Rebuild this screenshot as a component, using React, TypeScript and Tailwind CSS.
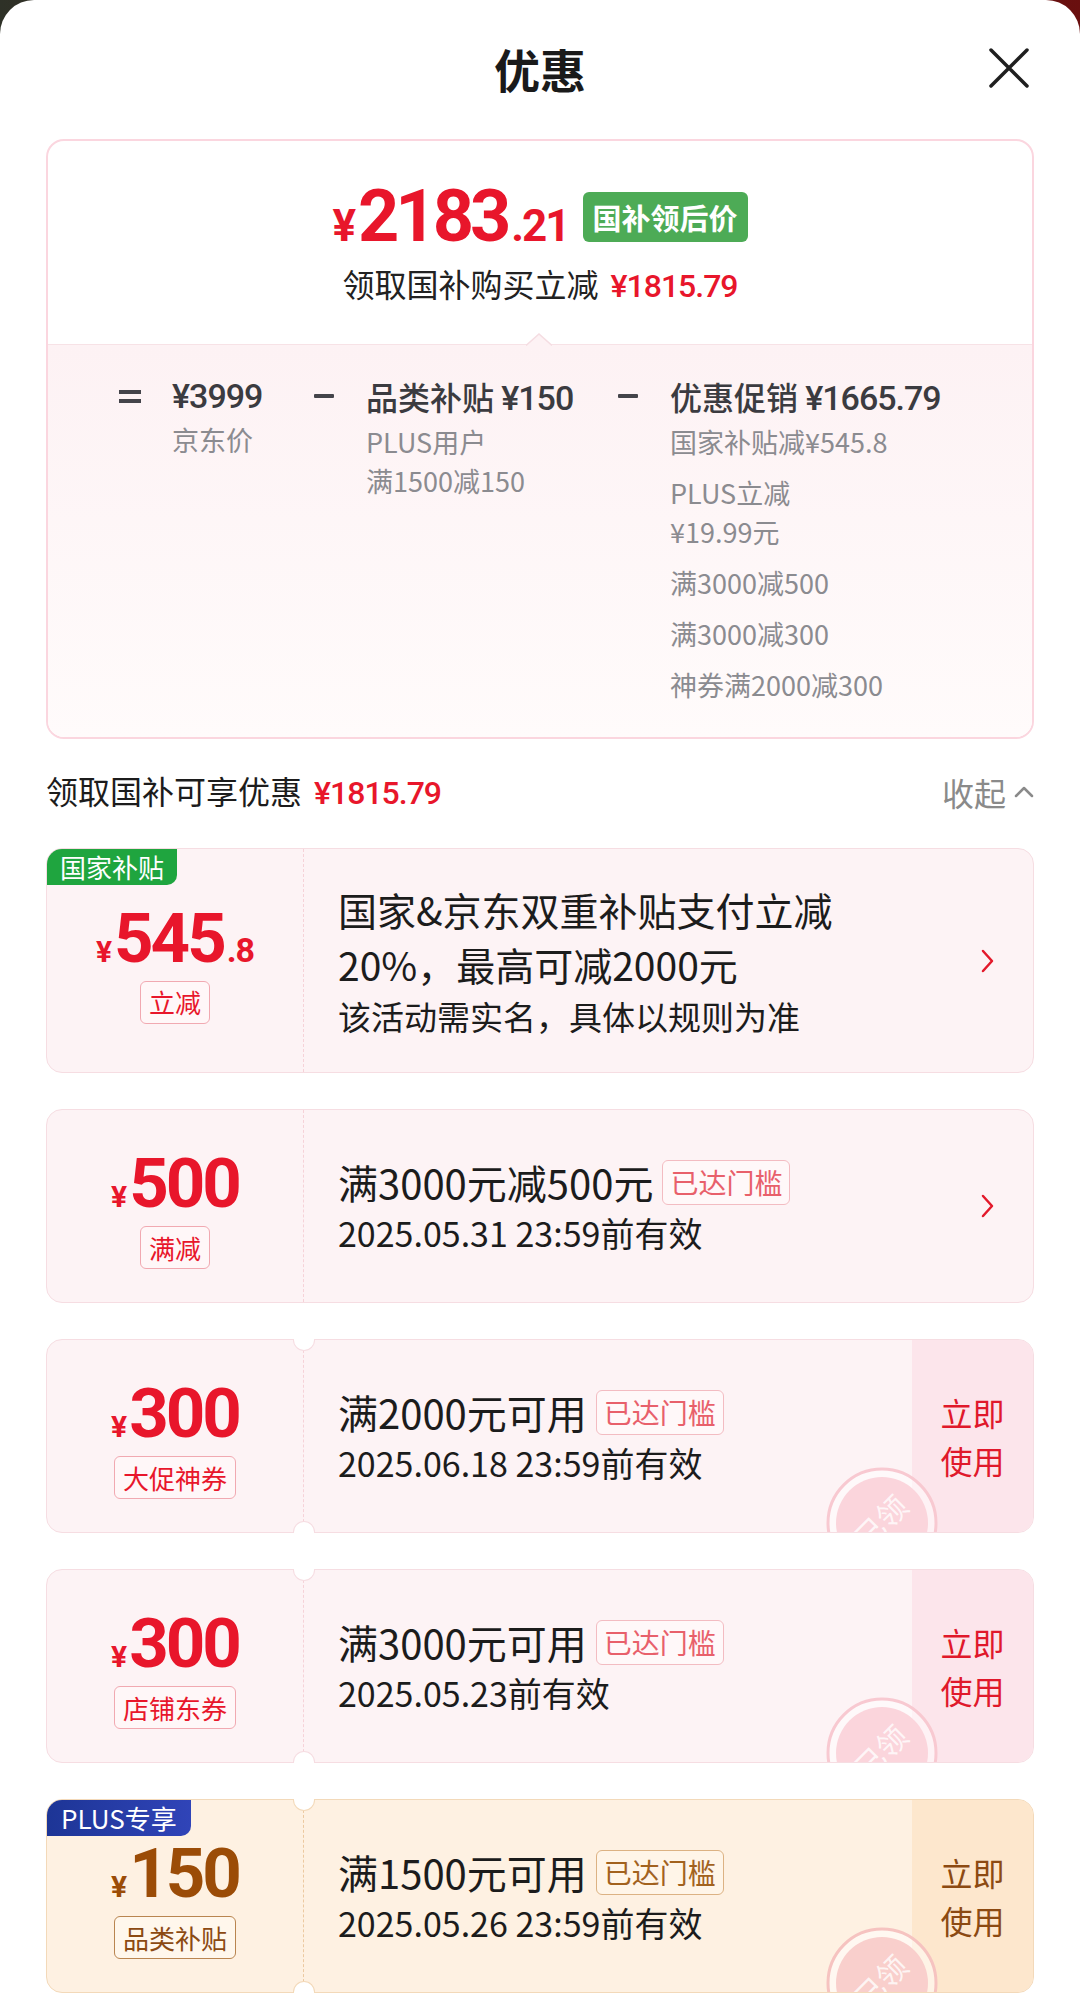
import { FC, ReactNode } from "react";

const cjk = "font-['Noto_Sans_CJK_SC','Noto_Sans',sans-serif]";
const num = "font-['Roboto','Noto_Sans_CJK_SC',sans-serif]";

type Theme = "red" | "plus";

const Stamp: FC<{ theme: Theme }> = ({ theme }) => {
  const ring = theme === "plus" ? "#f6c3c0" : "#f8c9d1";
  const fill = theme === "plus" ? "#f9cfcc" : "#fbd5dc";
  return (
    <svg
      className="absolute left-[779px] top-[127px]"
      width="112"
      height="112"
      viewBox="0 0 112 112"
    >
      <circle cx="56" cy="56" r="54" fill="#fff" fillOpacity="0.5" stroke={ring} strokeWidth="3" />
      <circle cx="56" cy="56" r="46" fill={fill} />
      <text
        x="56"
        y="66"
        textAnchor="middle"
        fontSize="30"
        fill="#fff"
        fillOpacity="0.8"
        transform="rotate(-45 56 56)"
        fontFamily="Noto Sans CJK SC, sans-serif"
      >
        已领
      </text>
    </svg>
  );
};

const Chevron: FC = () => (
  <svg width="14" height="24" viewBox="0 0 14 24" className="shrink-0">
    <path d="M2 2 L11 12 L2 22" fill="none" stroke="#e3192b" strokeWidth="2.5" strokeLinecap="round" strokeLinejoin="round" />
  </svg>
);

const Notch: FC<{ pos: "top" | "bottom"; border: string }> = ({ pos, border }) =>
  pos === "top" ? (
    <div className={`absolute left-[246px] top-[-1px] h-[12px] w-[22px] rounded-b-full border border-t-0 bg-white ${border}`} />
  ) : (
    <div className={`absolute left-[246px] bottom-[-1px] h-[12px] w-[22px] rounded-t-full border border-b-0 bg-white ${border}`} />
  );

interface CouponProps {
  theme?: Theme;
  height: string;
  badge?: ReactNode;
  amount: string;
  decimal?: string;
  tag: string;
  children: ReactNode;
  notches?: boolean;
  action?: boolean;
  chevron?: boolean;
}

const Coupon: FC<CouponProps> = ({
  theme = "red",
  height,
  badge,
  amount,
  decimal,
  tag,
  children,
  notches,
  action,
  chevron,
}) => {
  const plus = theme === "plus";
  return (
    <div
      className={`relative rounded-[16px] border ${height} ${
        plus ? "border-[#f3d9b9] bg-[#fef1e2]" : "border-[#f6dde2] bg-[#fdf3f5]"
      }`}
    >
      <div className="relative flex h-full overflow-hidden rounded-[15px]">
        {badge}
        <div
          className={`flex w-[257px] shrink-0 flex-col items-center justify-center border-r border-dashed pt-[6px] ${
            plus ? "border-[#ecc9a0]" : "border-[#f6d2d8]"
          }`}
        >
          <div className={`flex items-baseline font-bold leading-none ${num} ${plus ? "text-[#9b4c07]" : "text-[#e8162b]"}`}>
            <span className="mr-[2px] text-[30px]">¥</span>
            <span className="text-[69px] tracking-[-3px]">{amount}</span>
            {decimal && <span className="ml-[3px] text-[34px] tracking-[-1px]">{decimal}</span>}
          </div>
          <div
            className={`mt-[8px] flex h-[43px] items-center rounded-[6px] border px-[8px] text-[26px] leading-none ${
              plus
                ? "border-[#b98550] bg-[#fff7ec] text-[#8c4a12]"
                : "border-[#f1a9b1] bg-[#fff7f8] text-[#e8162b]"
            }`}
          >
            {tag}
          </div>
        </div>
        <div className="flex min-w-0 flex-1 items-center pl-[34px]">
          <div className="flex-1 text-[#1c1c1c]">{children}</div>
          {chevron && (
            <div className="pr-[38px]">
              <Chevron />
            </div>
          )}
          {action && (
            <div
              className={`flex h-full w-[121px] shrink-0 flex-col items-center justify-center text-[32px] leading-[48px] ${
                plus ? "bg-[#fde7cd] text-[#8c4a12]" : "bg-[#fce5eb] text-[#e0192b]"
              }`}
            >
              <span>立即</span>
              <span>使用</span>
            </div>
          )}
        </div>
        {action && <Stamp theme={theme} />}
      </div>
      {notches && (
        <>
          <Notch pos="top" border={plus ? "border-[#f3d9b9]" : "border-[#f6dde2]"} />
          <Notch pos="bottom" border={plus ? "border-[#f3d9b9]" : "border-[#f6dde2]"} />
        </>
      )}
    </div>
  );
};

const Reached: FC<{ plus?: boolean }> = ({ plus }) => (
  <span
    className={`ml-[9px] inline-flex h-[45px] items-center rounded-[6px] border px-[7px] text-[28px] leading-none ${
      plus ? "border-[#dcb283] bg-[#fff5e8] text-[#a2621e]" : "border-[#f3bcc2] bg-[#fff8f9] text-[#e8606b]"
    }`}
  >
    已达门槛
  </span>
);

const CouponText: FC<{ title: string; date: string; plus?: boolean }> = ({ title, date, plus }) => (
  <div>
    <div className="flex items-center text-[40px] leading-[54px]">
      <span>{title}</span>
      <Reached plus={plus} />
    </div>
    <div className="text-[34px] leading-[48px]">{date}</div>
  </div>
);

const SubItem: FC<{ children: ReactNode }> = ({ children }) => (
  <div className="text-[27px] leading-[39px] text-[#8b8b90]">{children}</div>
);

const Minus: FC = () => (
  <div className="flex h-[40px] w-[52px] items-center">
    <div className="h-[4px] w-[20px] rounded-[1px] bg-[#44444a]" />
  </div>
);

const App: FC = () => {
  return (
    <div className={`min-h-[2012px] w-[1080px] bg-gradient-to-r from-[#2e3127] via-[#4a1a16] to-[#6a0f0f] ${cjk}`}>
      <div className="min-h-[2012px] rounded-t-[34px] bg-white pb-[17px]">
        {/* Header */}
        <div className="relative flex h-[136px] items-center justify-center">
          <h1 className="text-[46px] font-bold leading-none text-[#1a1a1a]">优惠</h1>
          <button className="absolute right-[50px] top-[47px]" aria-label="close">
            <svg width="42" height="42" viewBox="0 0 42 42">
              <path d="M3 3 L39 39 M39 3 L3 39" stroke="#1f1f1f" strokeWidth="3.5" strokeLinecap="round" />
            </svg>
          </button>
        </div>

        {/* Price summary */}
        <div className="mx-[46px] mt-[3px] overflow-hidden rounded-[18px] border-2 border-[#fbd6df]">
          <div className="flex flex-col items-center pb-[38px] pt-[40px]">
            <div className="flex items-center">
              <div className={`flex items-baseline font-bold leading-none text-[#e8162b] ${num}`}>
                <span className="mr-[2px] text-[44px]">¥</span>
                <span className="text-[72px] tracking-[-4px]">2183</span>
                <span className="ml-[4px] text-[44px] tracking-[-2px]">.21</span>
              </div>
              <div className="ml-[14px] flex h-[50px] items-center rounded-[6px] bg-[#4dab56] px-[10px] text-[29px] font-bold leading-none text-white">
                国补领后价
              </div>
            </div>
            <div className="mt-[10px] flex items-baseline text-[32px] leading-[40px] text-[#222]">
              <span>领取国补购买立减</span>
              <span className={`ml-[12px] font-medium text-[#e8162b] ${num} text-[32px] tracking-[-1px]`}>¥1815.79</span>
            </div>
          </div>

          <div className="relative border-t-[1.5px] border-[#f7e2e6] bg-gradient-to-b from-[#fdf2f4] to-[#fffbfb] pb-[33px] pt-[31px]">
            <svg className="absolute left-[478px] top-[-12px]" width="26" height="13" viewBox="0 0 26 13">
              <path d="M0 12.5 L13 1 L26 12.5" fill="#fdf2f4" stroke="#f5dde2" strokeWidth="1.5" />
            </svg>
            <div className="flex pl-[71px] text-[#3b3b40]">
              <div className="flex h-[40px] w-[53px] flex-col justify-center gap-[5px]">
                <div className="h-[4px] w-[22px] bg-[#44444a]" />
                <div className="h-[4px] w-[22px] bg-[#44444a]" />
              </div>
              <div className="w-[142px]">
                <div className={`text-[34px] font-medium leading-[40px] tracking-[-1px] ${num}`}>¥3999</div>
                <div className="mt-[4px]">
                  <SubItem>京东价</SubItem>
                </div>
              </div>
              <Minus />
              <div className="w-[252px]">
                <div className="whitespace-nowrap text-[32px] font-medium leading-[40px]">
                  品类补贴 <span className={`${num} text-[34px] tracking-[-1px]`}>¥150</span>
                </div>
                <div className="mt-[4px]">
                  <SubItem>
                    PLUS用户
                    <br />
                    满1500减150
                  </SubItem>
                </div>
              </div>
              <Minus />
              <div>
                <div className="whitespace-nowrap text-[32px] font-medium leading-[40px]">
                  优惠促销 <span className={`${num} text-[34px] tracking-[-1px]`}>¥1665.79</span>
                </div>
                <div className="mt-[4px] flex flex-col gap-[12px]">
                  <SubItem>国家补贴减¥545.8</SubItem>
                  <SubItem>
                    PLUS立减
                    <br />
                    ¥19.99元
                  </SubItem>
                  <SubItem>满3000减500</SubItem>
                  <SubItem>满3000减300</SubItem>
                  <SubItem>神券满2000减300</SubItem>
                </div>
              </div>
            </div>
          </div>
        </div>

        {/* Section header */}
        <div className="mx-[46px] mt-[31px] flex items-center justify-between">
          <div className="flex items-baseline text-[32px] leading-[40px] text-[#1c1c1c]">
            <span>领取国补可享优惠</span>
            <span className={`ml-[12px] text-[32px] font-medium tracking-[-1px] text-[#e8162b] ${num}`}>¥1815.79</span>
          </div>
          <div className="flex items-center text-[32px] leading-[40px] text-[#8a8a8a]">
            <span>收起</span>
            <svg className="ml-[8px]" width="20" height="12" viewBox="0 0 20 12">
              <path d="M2 10 L10 2 L18 10" fill="none" stroke="#8a8a8a" strokeWidth="2.5" strokeLinecap="round" strokeLinejoin="round" />
            </svg>
          </div>
        </div>

        {/* Coupons */}
        <div className="mx-[46px] mt-[35px] flex flex-col gap-[36px]">
          <Coupon
            height="h-[225px]"
            amount="545"
            decimal=".8"
            tag="立减"
            chevron
            badge={
              <div className="absolute left-0 top-0 flex h-[36px] items-center rounded-br-[10px] bg-[#1fa53f] px-[13px] text-[26px] leading-none text-white">
                国家补贴
              </div>
            }
          >
            <div className="text-[39px] leading-[55px]">
              国家&京东双重补贴支付立减
              <br />
              20%，最高可减2000元
            </div>
            <div className="text-[33px] leading-[48px]">该活动需实名，具体以规则为准</div>
          </Coupon>

          <Coupon height="h-[194px]" amount="500" tag="满减" chevron>
            <CouponText title="满3000元减500元" date="2025.05.31 23:59前有效" />
          </Coupon>

          <Coupon height="h-[194px]" amount="300" tag="大促神券" notches action>
            <CouponText title="满2000元可用" date="2025.06.18 23:59前有效" />
          </Coupon>

          <Coupon height="h-[194px]" amount="300" tag="店铺东券" notches action>
            <CouponText title="满3000元可用" date="2025.05.23前有效" />
          </Coupon>

          <Coupon
            theme="plus"
            height="h-[194px]"
            amount="150"
            tag="品类补贴"
            notches
            action
            badge={
              <div className="absolute left-0 top-0 flex h-[36px] items-center rounded-br-[10px] bg-gradient-to-r from-[#1d3596] to-[#3044b8] px-[14px] text-[26px] leading-none text-white">
                PLUS专享
              </div>
            }
          >
            <CouponText title="满1500元可用" date="2025.05.26 23:59前有效" plus />
          </Coupon>
        </div>
      </div>
    </div>
  );
};

export default App;
